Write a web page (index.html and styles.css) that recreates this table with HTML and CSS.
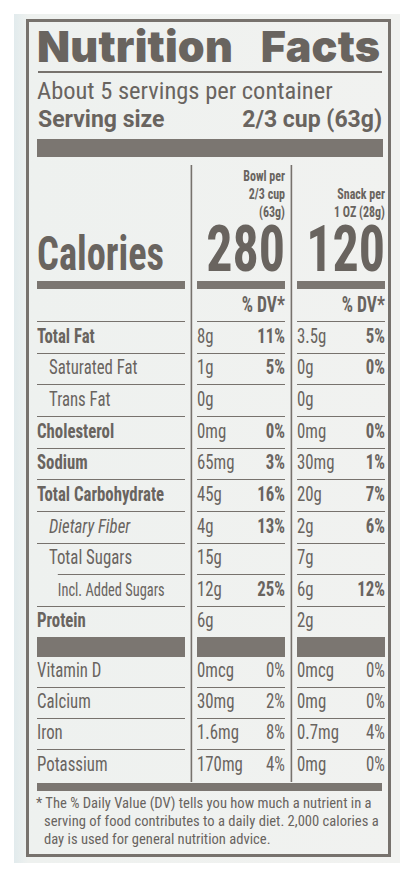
FILE: index.html
```html
<!DOCTYPE html>
<html lang="en">
<head>
  <meta charset="UTF-8" />
  <meta name="viewport" content="width=device-width, initial-scale=1.0" />
  <title>Nutrition Facts</title>
  <link rel="stylesheet" href="styles.css">
</head>
<body>
  <div class="paper">
    <div class="label">
      <h1 class="title">Nutrition Facts</h1>
      <div class="rule"></div>
      <p class="servings">About 5 servings per container</p>
      <div class="serving-size"><span>Serving size</span><span>2/3 cup (63g)</span></div>
      <div class="bar"></div>

      <div class="facts">
        <div class="row head">
          <div class="cell lab"><div class="in"><span class="cal-label">Calories</span></div></div>
          <div class="cell val"><div class="in"><div class="per">Bowl per<br>2/3 cup<br>(63g)</div><div class="kcal">280</div></div></div>
          <div class="cell val last"><div class="in"><div class="per">Snack per<br>1 OZ (28g)</div><div class="kcal">120</div></div></div>
        </div>
        <div class="row dv">
          <div class="cell lab"><div class="in"></div></div>
          <div class="cell val"><div class="in">% DV*</div></div>
          <div class="cell val last"><div class="in">% DV*</div></div>
        </div>

        <div class="row">
          <div class="cell lab"><div class="in"><b>Total Fat</b></div></div>
          <div class="cell val"><div class="in"><span>8g</span><b>11%</b></div></div>
          <div class="cell val last"><div class="in"><span>3.5g</span><b>5%</b></div></div>
        </div>
        <div class="row">
          <div class="cell lab"><div class="in sub"><span>Saturated Fat</span></div></div>
          <div class="cell val"><div class="in"><span>1g</span><b>5%</b></div></div>
          <div class="cell val last"><div class="in"><span>0g</span><b>0%</b></div></div>
        </div>
        <div class="row">
          <div class="cell lab"><div class="in sub"><span>Trans Fat</span></div></div>
          <div class="cell val"><div class="in"><span>0g</span></div></div>
          <div class="cell val last"><div class="in"><span>0g</span></div></div>
        </div>
        <div class="row">
          <div class="cell lab"><div class="in"><b>Cholesterol</b></div></div>
          <div class="cell val"><div class="in"><span>0mg</span><b>0%</b></div></div>
          <div class="cell val last"><div class="in"><span>0mg</span><b>0%</b></div></div>
        </div>
        <div class="row">
          <div class="cell lab"><div class="in"><b>Sodium</b></div></div>
          <div class="cell val"><div class="in"><span>65mg</span><b>3%</b></div></div>
          <div class="cell val last"><div class="in"><span>30mg</span><b>1%</b></div></div>
        </div>
        <div class="row">
          <div class="cell lab"><div class="in"><b>Total Carbohydrate</b></div></div>
          <div class="cell val"><div class="in"><span>45g</span><b>16%</b></div></div>
          <div class="cell val last"><div class="in"><span>20g</span><b>7%</b></div></div>
        </div>
        <div class="row">
          <div class="cell lab"><div class="in sub"><i>Dietary Fiber</i></div></div>
          <div class="cell val"><div class="in"><span>4g</span><b>13%</b></div></div>
          <div class="cell val last"><div class="in"><span>2g</span><b>6%</b></div></div>
        </div>
        <div class="row">
          <div class="cell lab"><div class="in short"><span>Total Sugars</span></div></div>
          <div class="cell val"><div class="in"><span>15g</span></div></div>
          <div class="cell val last"><div class="in"><span>7g</span></div></div>
        </div>
        <div class="row">
          <div class="cell lab"><div class="in sub2"><span>Incl. Added Sugars</span></div></div>
          <div class="cell val"><div class="in"><span>12g</span><b>25%</b></div></div>
          <div class="cell val last"><div class="in"><span>6g</span><b>12%</b></div></div>
        </div>
        <div class="row protein">
          <div class="cell lab"><div class="in"><b>Protein</b></div></div>
          <div class="cell val"><div class="in"><span>6g</span></div></div>
          <div class="cell val last"><div class="in"><span>2g</span></div></div>
        </div>

        <div class="row vit">
          <div class="cell lab"><div class="in"><span>Vitamin D</span></div></div>
          <div class="cell val"><div class="in"><span>0mcg</span><span>0%</span></div></div>
          <div class="cell val last"><div class="in"><span>0mcg</span><span>0%</span></div></div>
        </div>
        <div class="row vit">
          <div class="cell lab"><div class="in"><span>Calcium</span></div></div>
          <div class="cell val"><div class="in"><span>30mg</span><span>2%</span></div></div>
          <div class="cell val last"><div class="in"><span>0mg</span><span>0%</span></div></div>
        </div>
        <div class="row vit">
          <div class="cell lab"><div class="in"><span>Iron</span></div></div>
          <div class="cell val"><div class="in"><span>1.6mg</span><span>8%</span></div></div>
          <div class="cell val last"><div class="in"><span>0.7mg</span><span>4%</span></div></div>
        </div>
        <div class="row vit end">
          <div class="cell lab"><div class="in"><span>Potassium</span></div></div>
          <div class="cell val"><div class="in"><span>170mg</span><span>4%</span></div></div>
          <div class="cell val last"><div class="in"><span>0mg</span><span>0%</span></div></div>
        </div>
      </div>

      <div class="bar-bottom"></div>
      <p class="note">* The % Daily Value (DV) tells you how much a nutrient in a<br>serving of food contributes to a daily diet. 2,000 calories a<br>day is used for general nutrition advice.</p>
    </div>
  </div>
</body>
</html>
```
FILE: styles.css
```css
* {
  box-sizing: border-box;
  margin: 0;
  padding: 0;
}

html, body {
  background: #fff;
  color: #69645f;
  font-family: "Roboto Condensed", Roboto, sans-serif;
  overflow: hidden;
}

.paper {
  margin: 14px 15px 0 14px;
  height: 849px;
  padding: 5px 9px 0 12px;
  background: linear-gradient(to right, #e2ebed, #eef1ef 14px, #f1f2f0);
}

.label {
  height: 838px;
  border: 3px solid #77726d;
  padding: 0 3px 0 8px;
}

.title {
  width: max-content;
  margin-top: 3px;
  font-family: Inter, "Liberation Sans", sans-serif;
  font-weight: 900;
  font-size: 43px;
  line-height: 43px;
  letter-spacing: 0.2px;
  word-spacing: 19px;
  white-space: nowrap;
}

.rule {
  height: 1.5px;
  margin: 3px 3px 0 1px;
  background: #77726d;
}

.servings {
  margin-top: 5.5px;
  font-size: 24.5px;
  line-height: 25px;
}

.serving-size {
  display: flex;
  justify-content: space-between;
  margin-top: 4.6px;
  padding: 0 3px 0 1px;
  font-family: Roboto, sans-serif;
  font-weight: 700;
  font-size: 23px;
  line-height: 23px;
}

.bar {
  height: 18px;
  margin: 8.4px 2px 0 0;
  background: #7b7671;
}

/* table text is set condensed: laid out 1.25x wide, then squeezed */
.facts {
  width: 435px;
  margin-top: 8px;
  transform: scaleX(0.8);
  transform-origin: left top;
}

.row {
  display: flex;
}

.cell {
  flex: none;
}

.lab {
  width: 191.5px;
  padding-right: 6.5px;
}

.val {
  width: 125px;
  padding: 0 6.5px;
  border-left: 2px solid #77726d;
}

.val.last {
  width: 118.5px;
  padding-right: 0;
}

.in {
  display: flex;
  align-items: center;
  justify-content: space-between;
  height: 31.67px;
  padding-bottom: 2px;
  border-bottom: 1.5px solid #77726d;
  font-size: 21px;
  line-height: 21px;
}

.in b {
  font-weight: 700;
}

.in.sub {
  padding-left: 15px;
}

.in.sub2 {
  padding-left: 26px;
  font-size: 18px;
}

.in.short {
  margin-left: 26px;
}

.in.short span {
  margin-left: -11px;
}

.head .in {
  height: 124px;
  align-items: flex-end;
  padding-bottom: 3.4px;
  border-bottom: 8px solid #7b7671;
}

.head .val .in {
  flex-direction: column;
  justify-content: flex-end;
  padding-bottom: 6.2px;
}

.cal-label {
  font-weight: 700;
  font-size: 48px;
  line-height: 48px;
}

.per {
  font-weight: 700;
  font-size: 15px;
  line-height: 18px;
  text-align: right;
}

.kcal {
  margin-top: 1.6px;
  font-weight: 700;
  font-size: 65px;
  line-height: 52px;
}

.dv .in {
  height: 33px;
  align-items: flex-start;
  justify-content: flex-end;
  padding: 5.5px 0 0;
  font-weight: 700;
  font-size: 22px;
  line-height: 22px;
}

.protein .in {
  height: 50px;
  padding-bottom: 3px;
  border-bottom: 20px solid #7b7671;
}

.vit .in {
  height: 31px;
}

.vit.end .in {
  height: 32px;
  border-bottom: 0;
}

.bar-bottom {
  height: 8px;
  margin: 1px 3px 0 0;
  background: #7b7671;
}

.note {
  margin-top: 4.3px;
  padding-left: 7px;
  text-indent: -8px;
  font-size: 14.6px;
  line-height: 17.7px;
  white-space: nowrap;
}
```
